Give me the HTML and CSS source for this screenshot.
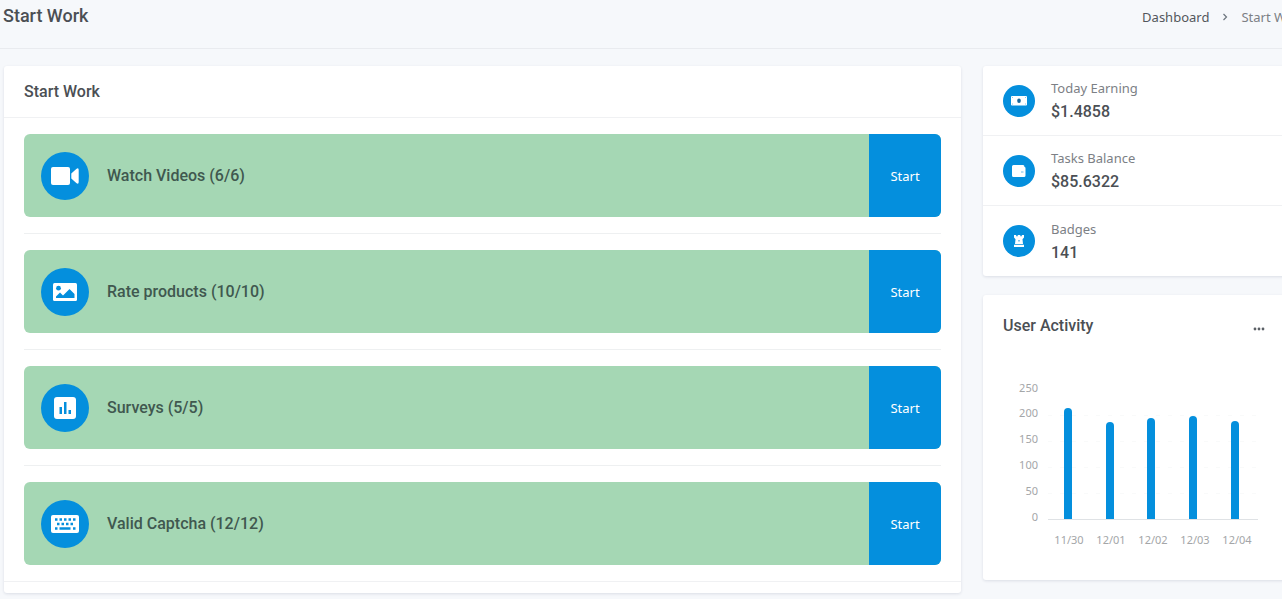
FILE: index.html
```
<!DOCTYPE html>
<html lang="en">
<head>
    <meta charset="UTF-8">
    <title>Start Work</title>
    <link rel="stylesheet" href="styles.css">
</head>
<body>
    <div class="page">
        <header class="page-header">
            <h1>Start Work</h1>
            <nav class="breadcrumb">
                <a href="#">Dashboard</a>
                <svg width="6" height="8" viewBox="0 0 6 8"><path d="M1.5 1l3 3-3 3" fill="none" stroke="#6c757d" stroke-width="1.2"/></svg>
                <span>Start Work</span>
            </nav>
        </header>
        <main class="content">
            <section class="card tasks">
                <h2 class="card-title">Start Work</h2>
                <ul class="task-list">
                    <li>
                        <div class="task">
                            <span class="task-icon">
                                <svg width="28" height="18" viewBox="0 0 28 18" fill="#fff"><rect width="19" height="18" rx="2"/><path d="M20.300 6.500l5-4.600q2.400-1.500 2.400 1v12.200q0 2.500-2.400 1l-5-4.600z"/></svg>
                            </span>
                            <h3>Watch Videos (6/6)</h3>
                            <button type="button">Start</button>
                        </div>
                    </li>
                    <li>
                        <div class="task">
                            <span class="task-icon">
                                <svg width="24" height="18" viewBox="0 0 24 18"><rect width="24" height="18" rx="1.500" fill="#fff"/><circle cx="5.500" cy="5.200" r="2.400" fill="#048fdd"/><path d="M3 15v-1.500L7 9.500l3 3L16.500 6l5 5v4z" fill="#048fdd"/></svg>
                            </span>
                            <h3>Rate products (10/10)</h3>
                            <button type="button">Start</button>
                        </div>
                    </li>
                    <li>
                        <div class="task">
                            <span class="task-icon">
                                <svg width="22" height="22" viewBox="0 0 22 22"><rect width="22" height="22" rx="3" fill="#fff"/><path d="M5.500 10h2.500v7H5.500zM10 5h2.500v12H10zM14.500 13H17v4h-2.500z" fill="#048fdd"/></svg>
                            </span>
                            <h3>Surveys (5/5)</h3>
                            <button type="button">Start</button>
                        </div>
                    </li>
                    <li>
                        <div class="task">
                            <span class="task-icon">
                                <svg width="28" height="18" viewBox="0 0 28 18"><rect width="28" height="18" rx="2" fill="#fff"/><path d="M4 4.500h21M6 9h17" stroke="#048fdd" stroke-width="2.500" stroke-dasharray="2.500 2"/><path d="M4 13.500h2.500M8.500 13.500h11M22 13.500h2.500" stroke="#048fdd" stroke-width="2.500"/></svg>
                            </span>
                            <h3>Valid Captcha (12/12)</h3>
                            <button type="button">Start</button>
                        </div>
                    </li>
                </ul>
            </section>
            <aside class="sidebar">
                <ul class="card stats">
                    <li>
                        <span class="stat-icon">
                            <svg width="16" height="10" viewBox="0 0 16 10"><rect width="16" height="9.500" rx="1" fill="#fff"/><ellipse cx="8" cy="4.800" rx="1.800" ry="2.200" fill="#17679c"/><path d="M1 1.500h1M14 1.500h1M1 8h1M14 8h1" stroke="#8cc8ec"/></svg>
                        </span>
                        <div>
                            <p>Today Earning</p>
                            <strong>$1.4858</strong>
                        </div>
                    </li>
                    <li>
                        <span class="stat-icon">
                            <svg width="14" height="12" viewBox="0 0 14 12"><path d="M1.500 0h9.500q1.500 0 1.500 2 1 0 1 1.300v7.200q0 1.500-1.500 1.500h-10.500Q0 12 0 10.500v-9Q0 0 1.500 0z" fill="#fff"/><path d="M9 7h2.500" stroke="#70bce8"/></svg>
                        </span>
                        <div>
                            <p>Tasks Balance</p>
                            <strong>$85.6322</strong>
                        </div>
                    </li>
                    <li>
                        <span class="stat-icon">
                            <svg width="12" height="12" viewBox="0 0 12 12"><path d="M1 0h2.200v1.300h1.500V0h2.600v1.300h1.500V0H11v2.500L9.500 4.200 10 9H2l.5-4.800L1 2.500zM1 9.800h10V12H1z" fill="#fff"/><path d="M5.500 6.500V5.500q.5-.8 1 0v1z" fill="#048fdd"/></svg>
                        </span>
                        <div>
                            <p>Badges</p>
                            <strong>141</strong>
                        </div>
                    </li>
                </ul>
                <section class="card activity">
                    <div class="activity-head">
                        <h2>User Activity</h2>
                        <button type="button" aria-label="More">
                            <svg width="12" height="4" viewBox="0 0 12 4" fill="#5b6066"><circle cx="2" cy="2" r="1.400"/><circle cx="6" cy="2" r="1.400"/><circle cx="10" cy="2" r="1.400"/></svg>
                        </button>
                    </div>
                    <svg class="chart" width="256" height="176" viewBox="0 0 256 176">
                        <g stroke="#f9fafa" stroke-dasharray="4 8">
                            <path d="M45 45.500h210M45 71.500h210M45 97.500h210M45 123.500h210"/>
                        </g>
                        <path d="M45 149.500h210" stroke="#dfe2e5"/>
                        <g fill="#048fdd">
                            <path d="M61 149V42a4 4 0 0 1 8 0v107z"/>
                            <path d="M103 149V56a4 4 0 0 1 8 0v93z"/>
                            <path d="M144 149V52a4 4 0 0 1 8 0v97z"/>
                            <path d="M186 149V50a4 4 0 0 1 8 0v99z"/>
                            <path d="M228 149V55a4 4 0 0 1 8 0v94z"/>
                        </g>
                        <g class="axis-y">
                            <text x="35" y="22">250</text>
                            <text x="35" y="47">200</text>
                            <text x="35" y="73">150</text>
                            <text x="35" y="99">100</text>
                            <text x="35" y="125">50</text>
                            <text x="35" y="151">0</text>
                        </g>
                        <g class="axis-x">
                            <text x="66" y="174">11/30</text>
                            <text x="108" y="174">12/01</text>
                            <text x="150" y="174">12/02</text>
                            <text x="192" y="174">12/03</text>
                            <text x="234" y="174">12/04</text>
                        </g>
                    </svg>
                </section>
            </aside>
        </main>
    </div>
</body>
</html>
```
FILE: styles.css
```
* {
    margin: 0;
    padding: 0;
    box-sizing: border-box;
}
body {
    background-color: #f6f8fb;
    color: #495057;
    font-family: "Noto Sans", sans-serif;
    font-size: 13px;
    overflow-x: hidden;
}
ul {
    list-style: none;
}
h1, h2, h3, strong {
    font-family: Roboto, sans-serif;
    font-size: 16px;
    font-weight: 500;
    line-height: 24px;
    color: #4b4f54;
}
h1 {
    font-size: 18px;
}
button {
    font-family: inherit;
    font-size: 13px;
    border: none;
    cursor: pointer;
}
/* the layout is a little wider than the window */
.page {
    margin-right: -24px;
}
.page-header {
    display: flex;
    justify-content: space-between;
    height: 49px;
    padding: 4px 0 0 3px;
    border-bottom: 1px solid #e9ebef;
}
.breadcrumb {
    display: flex;
    align-items: center;
    gap: 13px;
    height: 26px;
    color: #7c8085;
    white-space: nowrap;
}
.breadcrumb a {
    color: #53575c;
    text-decoration: none;
}
.content {
    display: flex;
    align-items: flex-start;
    gap: 22px;
    padding: 17px 4px 6px;
}
.card {
    background-color: #fff;
    border-radius: 3px;
    box-shadow: 0 1px 3px rgba(30, 40, 80, 0.12);
}
.tasks {
    flex: 1;
    padding-bottom: 11px;
}
.card-title {
    padding: 14px 20px 13px;
    border-bottom: 1px solid #f0f1f3;
}
.task-list {
    border-bottom: 1px solid #f0f1f3;
}
.task-list li {
    margin: 0 20px;
    padding: 16px 0;
    border-bottom: 1px solid #eef0f1;
}
.task-list li:last-child {
    border-bottom: none;
}
.task {
    display: flex;
    align-items: center;
    height: 83px;
    padding-left: 17px;
    background-color: #a5d7b4;
    border-radius: 6px;
    overflow: hidden;
}
.task h3 {
    flex: 1;
    margin-left: 18px;
    color: #40584f;
}
.task button {
    align-self: stretch;
    width: 72px;
    background-color: #048fdd;
    color: #fff;
}
.task-icon, .stat-icon {
    display: flex;
    align-items: center;
    justify-content: center;
    width: 48px;
    height: 48px;
    border-radius: 50%;
    background-color: #048fdd;
}
.stat-icon {
    width: 32px;
    height: 32px;
}
.sidebar {
    width: 319px;
}
.stats li {
    display: flex;
    align-items: center;
    gap: 16px;
    height: 70px;
    padding: 0 20px;
    border-bottom: 1px solid #f0f1f3;
}
.stats li:last-child {
    border-bottom: none;
}
.stats p {
    line-height: 22px;
    color: #7c8085;
}
.stats strong {
    display: block;
    margin-top: 1px;
}
.activity {
    margin-top: 19px;
    padding: 18px 20px 34px;
}
.activity-head {
    display: flex;
    justify-content: space-between;
    align-items: center;
}
.activity-head button {
    padding: 4px 17px;
    background: none;
}
.chart {
    display: block;
    margin-top: 31px;
}
.chart text {
    font-size: 11px;
    fill: #a4a6a8;
}
.axis-y {
    text-anchor: end;
}
.axis-x {
    text-anchor: middle;
}
```
